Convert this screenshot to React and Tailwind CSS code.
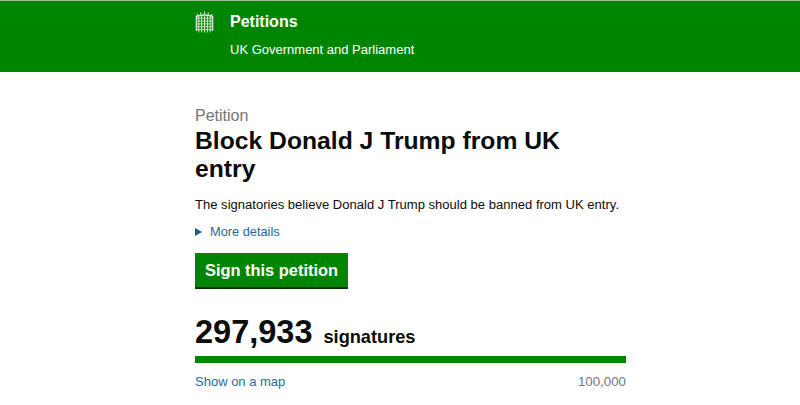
const FONT = "font-['Liberation_Sans',Arial,sans-serif]";

function Portcullis() {
  return (
    <svg viewBox="0 0 20 24" aria-hidden="true" className="h-[23px] w-[19px]" fill="none" stroke="#dcebdc">
      <path d="M2.5 5 V3 M6 3.5 V1.5 M10 3 V0.5 M14 3.5 V1.5 M17.5 5 V3" strokeWidth="1.3" />
      <path d="M2 6 C5 3.5 15 3.5 18 6" strokeWidth="1.4" />
      <path d="M2 7.5 H18 M2 10.5 H18 M2 13.5 H18 M2 16.5 H18 M2 19.5 H18" strokeWidth="0.9" />
      <path d="M4 6 V22.5 M7 5 V22.5 M10 5 V22.5 M13 5 V22.5 M16 6 V22.5" strokeWidth="1" />
      <path d="M1.5 5 V21 M18.5 5 V21" strokeWidth="1.4" />
    </svg>
  );
}

export default function App() {
  return (
    <div className={`h-[405px] w-[800px] overflow-hidden bg-white ${FONT}`}>
      <header className="h-[72px] border-t border-[#8fbf8f] bg-[#008500] pl-[195px] text-white">
        <div className="flex pt-[10px]">
          <div className="w-[35px]">
            <Portcullis />
          </div>
          <div>
            <div className="text-[16px] leading-[22px] font-bold">Petitions</div>
            <div className="mt-[9px] text-[13px] leading-[16px]">UK Government and Parliament</div>
          </div>
        </div>
      </header>

      <main className="ml-[195px] w-[431px] pt-[34px]">
        <div className="text-[16px] leading-[20px] text-[#6f777b]">Petition</div>
        <h1 className="mt-[1px] w-[380px] text-[24.7px] leading-[28px] font-bold text-[#0b0c0c]">
          Block Donald J Trump from UK entry
        </h1>
        <p className="mt-[14px] text-[13.05px] leading-[16px] text-[#0b0c0c]">
          The signatories believe Donald J Trump should be banned from UK entry.
        </p>
        <a className="mt-[11px] flex items-center text-[12.8px] leading-[16px] text-[#2b6a99]">
          <span className="mr-[8px] h-0 w-0 border-y-[4px] border-l-[7px] border-y-transparent border-l-[#1d5a8a]" />
          More details
        </a>
        <button
          type="button"
          className="mt-[13px] block h-[36px] w-[153px] border-b-2 border-[#003300] bg-[#008500] text-[16.4px] font-bold text-white"
        >
          Sign this petition
        </button>
        <div className="mt-[19px] flex items-baseline">
          <span className="text-[32.5px] leading-[48px] font-bold text-[#0b0c0c]">297,933</span>
          <span className="ml-[11px] text-[18.2px] font-bold text-[#0b0c0c]">signatures</span>
        </div>
        <div className="h-[7px] bg-[#008500]" />
        <div className="mt-[11px] flex justify-between text-[13px] leading-[16px]">
          <a className="text-[#2b6a99]">Show on a map</a>
          <span className="text-[13.3px] text-[#6f777b]">100,000</span>
        </div>
      </main>
    </div>
  );
}
